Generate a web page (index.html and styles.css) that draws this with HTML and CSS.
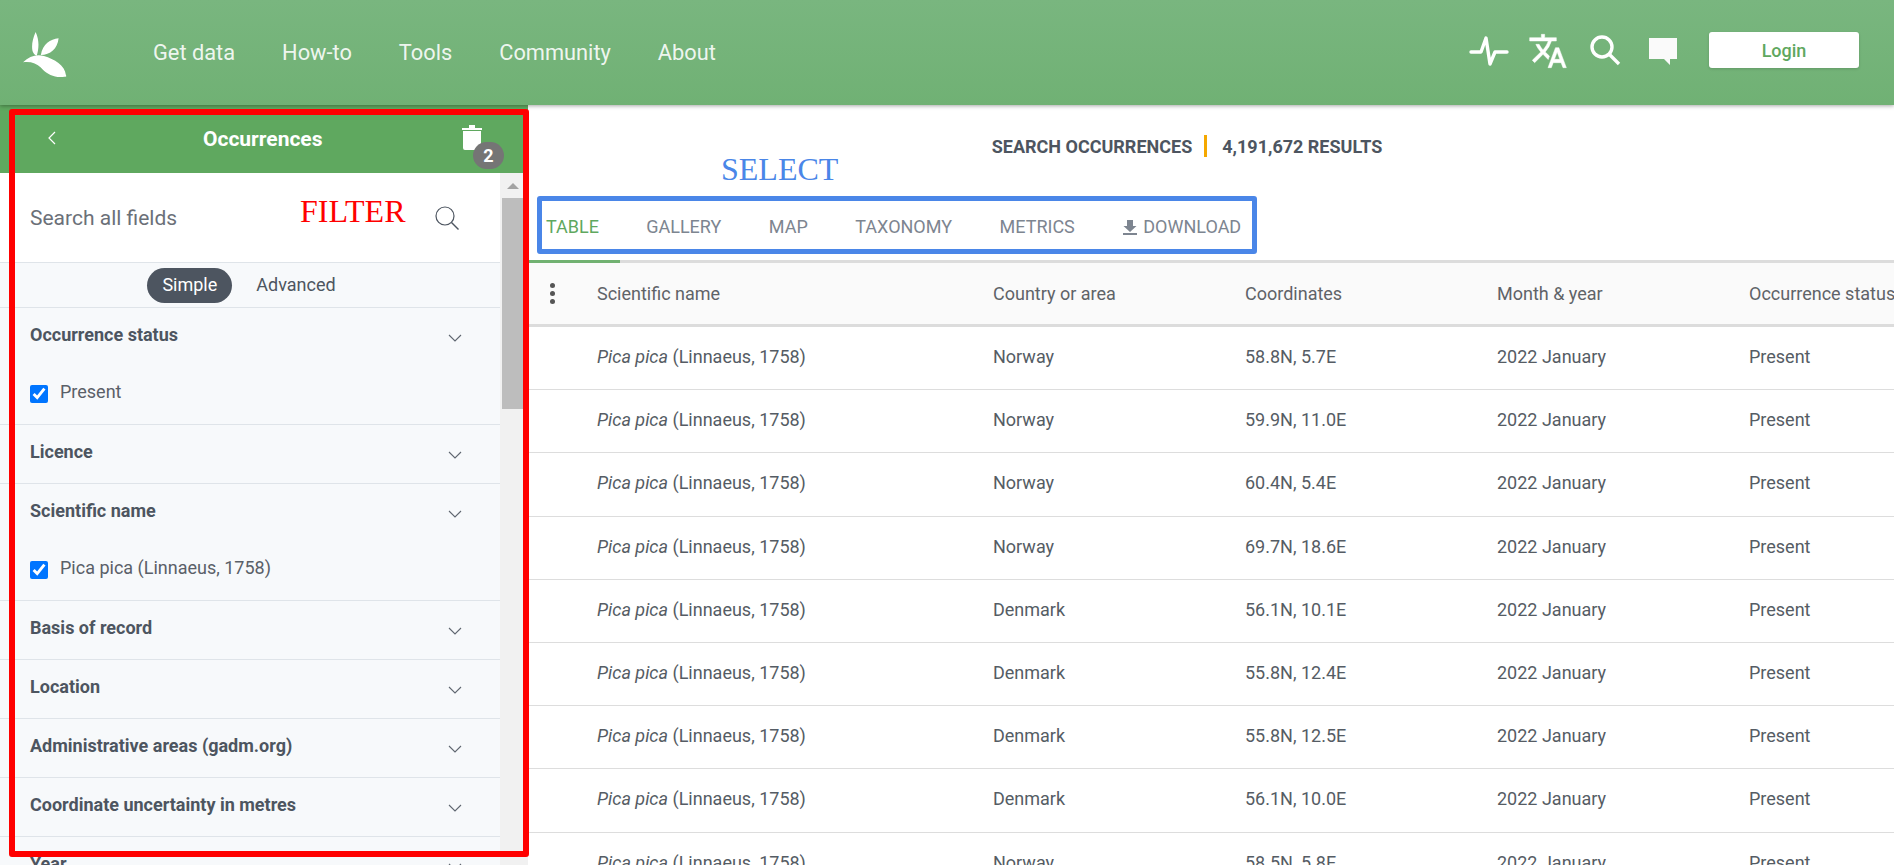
FILE: index.html
```html
<!DOCTYPE html>
<html lang="en">
<head>
<meta charset="utf-8">
<title>Occurrences</title>
<link rel="stylesheet" href="styles.css">
</head>
<body>
<header class="topbar">
  <svg class="logo" viewBox="0 0 42 44" width="44" height="46"><path fill="#fff" d="M12 1C9 8 8 14 9 19c.5 2 2 4 4 5 2-6 3-15-1-23zM34 7c-8 1-15 5-17 16 9 0 16-6 17-16zM0 30c6-6 13-8 20-6 10 3 20 9 21 18 1 2 0 2-3 2-8 1-16-3-21-9-4-4-10-6-17-5z"/></svg>
  <nav class="nav">
    <a>Get data</a><a>How-to</a><a>Tools</a><a>Community</a><a>About</a>
  </nav>
  <div class="tools">
    <svg class="i-pulse" viewBox="0 0 40 32" width="40" height="32"><path fill="none" stroke="#fff" stroke-width="3.4" stroke-linecap="round" stroke-linejoin="round" d="M2 17h10l5-14 4 26 5-12h12"/></svg>
    <svg class="i-trans" viewBox="0 0 24 24" width="40" height="40"><path fill="#fff" stroke="#fff" stroke-width=".3" d="M12.87 15.07l-2.54-2.51.03-.03A17.52 17.52 0 0 0 14.07 6H17V4h-7V2H8v2H1v1.99h11.17C11.5 7.92 10.44 9.75 9 11.35 8.07 10.32 7.3 9.19 6.69 8h-2c.73 1.63 1.73 3.17 2.98 4.56l-5.09 5.02L4 19l5-5 3.11 3.11.76-2.04zM18.5 10h-2L12 22h2l1.12-3h4.75L21 22h2l-4.5-12zm-2.62 7l1.62-4.33L19.12 17h-3.24z"/></svg>
    <svg class="i-search" viewBox="0 0 32 32" width="32" height="32"><circle cx="13" cy="13" r="10" fill="none" stroke="#fff" stroke-width="3.4"/><path stroke="#fff" stroke-width="3.4" d="M20 20l10 10"/></svg>
    <svg class="i-chat" viewBox="0 0 30 30" width="30" height="30"><path fill="#fafafa" d="M1 1h28v21h-7v6l-6-6H1z"/></svg>
    <button class="login">Login</button>
  </div>
</header>
<div class="page">
  <aside class="side">
    <div class="side-head">
      <svg class="back" viewBox="0 0 10 14" width="10" height="14"><path fill="none" stroke="#fff" stroke-width="1.2" d="M8 1L2 7l6 6"/></svg>
      <strong class="side-title">Occurrences</strong>
      <span class="trash">
        <svg viewBox="0 0 20 26" width="20" height="26"><path fill="#fff" d="M0 4h7V1h6v3h7v2H0zM1 7h18v19H3a2 2 0 0 1-2-2z"/></svg>
        <b class="badge">2</b>
      </span>
    </div>
    <div class="side-body">
      <div class="side-scroll">
        <div class="search">
          <span>Search all fields</span>
          <svg viewBox="0 0 26 26" width="26" height="26"><circle cx="11" cy="11" r="9" fill="none" stroke="#4d5560" stroke-width="1.2"/><path stroke="#4d5560" stroke-width="1.4" d="M17.5 17.5l7 7"/></svg>
        </div>
        <div class="toggle"><span class="pill">Simple</span><span class="adv">Advanced</span></div>
        <section class="facet tall"><div class="facet-h"><b>Occurrence status</b><svg class="chev" viewBox="0 0 14 8" width="14" height="8"><path d="M1 1l6 6 6-6"/></svg></div>
          <label class="check"><input type="checkbox" checked><span>Present</span></label></section>
        <section class="facet"><div class="facet-h"><b>Licence</b><svg class="chev" viewBox="0 0 14 8" width="14" height="8"><path d="M1 1l6 6 6-6"/></svg></div></section>
        <section class="facet tall"><div class="facet-h"><b>Scientific name</b><svg class="chev" viewBox="0 0 14 8" width="14" height="8"><path d="M1 1l6 6 6-6"/></svg></div>
          <label class="check"><input type="checkbox" checked><span>Pica pica (Linnaeus, 1758)</span></label></section>
        <section class="facet"><div class="facet-h"><b>Basis of record</b><svg class="chev" viewBox="0 0 14 8" width="14" height="8"><path d="M1 1l6 6 6-6"/></svg></div></section>
        <section class="facet"><div class="facet-h"><b>Location</b><svg class="chev" viewBox="0 0 14 8" width="14" height="8"><path d="M1 1l6 6 6-6"/></svg></div></section>
        <section class="facet"><div class="facet-h"><b>Administrative areas (gadm.org)</b><svg class="chev" viewBox="0 0 14 8" width="14" height="8"><path d="M1 1l6 6 6-6"/></svg></div></section>
        <section class="facet"><div class="facet-h"><b>Coordinate uncertainty in metres</b><svg class="chev" viewBox="0 0 14 8" width="14" height="8"><path d="M1 1l6 6 6-6"/></svg></div></section>
        <section class="facet"><div class="facet-h"><b>Year</b><svg class="chev" viewBox="0 0 14 8" width="14" height="8"><path d="M1 1l6 6 6-6"/></svg></div></section>
      </div>
      <div class="scrollbar"><i class="arrow"></i><i class="thumb"></i></div>
    </div>
  </aside>
  <main class="main">
    <div class="title"><span>SEARCH OCCURRENCES</span><i class="sep"></i><span>4,191,672 RESULTS</span></div>
    <div class="tabs">
      <a class="tab active">TABLE</a><a class="tab">GALLERY</a><a class="tab">MAP</a><a class="tab">TAXONOMY</a><a class="tab">METRICS</a>
      <a class="tab tab-dl"><svg viewBox="0 0 14 16" width="14" height="16"><path fill="#7d8590" d="M4 1h6v6h3.5L7 13 .5 7H4zM0 14h14v2H0z"/></svg> DOWNLOAD</a>
    </div>
    <div class="table">
      <div class="tr th"><span class="kebab"><i></i><i></i><i></i></span><span>Scientific name</span><span>Country or area</span><span>Coordinates</span><span>Month &amp; year</span><span>Occurrence status</span></div>
      <div class="tr"><span></span><span><em>Pica pica</em> (Linnaeus, 1758)</span><span>Norway</span><span>58.8N, 5.7E</span><span>2022 January</span><span>Present</span></div>
      <div class="tr"><span></span><span><em>Pica pica</em> (Linnaeus, 1758)</span><span>Norway</span><span>59.9N, 11.0E</span><span>2022 January</span><span>Present</span></div>
      <div class="tr"><span></span><span><em>Pica pica</em> (Linnaeus, 1758)</span><span>Norway</span><span>60.4N, 5.4E</span><span>2022 January</span><span>Present</span></div>
      <div class="tr"><span></span><span><em>Pica pica</em> (Linnaeus, 1758)</span><span>Norway</span><span>69.7N, 18.6E</span><span>2022 January</span><span>Present</span></div>
      <div class="tr"><span></span><span><em>Pica pica</em> (Linnaeus, 1758)</span><span>Denmark</span><span>56.1N, 10.1E</span><span>2022 January</span><span>Present</span></div>
      <div class="tr"><span></span><span><em>Pica pica</em> (Linnaeus, 1758)</span><span>Denmark</span><span>55.8N, 12.4E</span><span>2022 January</span><span>Present</span></div>
      <div class="tr"><span></span><span><em>Pica pica</em> (Linnaeus, 1758)</span><span>Denmark</span><span>55.8N, 12.5E</span><span>2022 January</span><span>Present</span></div>
      <div class="tr"><span></span><span><em>Pica pica</em> (Linnaeus, 1758)</span><span>Denmark</span><span>56.1N, 10.0E</span><span>2022 January</span><span>Present</span></div>
      <div class="tr"><span></span><span><em>Pica pica</em> (Linnaeus, 1758)</span><span>Norway</span><span>58.5N, 5.8E</span><span>2022 January</span><span>Present</span></div>
    </div>
  </main>
</div>
<div class="mark red-box"></div>
<div class="mark blue-box"></div>
<span class="mark label-filter">FILTER</span>
<span class="mark label-select">SELECT</span>
</body>
</html>
```

FILE: styles.css
```css
* { box-sizing: border-box; }
html, body { margin: 0; height: 100%; overflow: hidden; }
body { width: 1894px; height: 865px; position: relative; background: #fff; font-family: Roboto, "Liberation Sans", sans-serif; color: #4d5560; }

.topbar { height: 105px; display: flex; align-items: center; background: linear-gradient(#79b67f, #70b174); box-shadow: 0 1px 4px rgba(0,0,0,.35); position: relative; z-index: 2; }
.logo { margin: 3px 0 0 23px; }
.nav { display: flex; gap: 47px; margin-left: 86px; font-size: 21.8px; color: rgba(255,255,255,.9); }
.tools { margin-left: auto; display: flex; align-items: center; padding-right: 35px; margin-top: -5px; }
.i-pulse { margin: 2px 18.5px 0 0; }
.i-trans { margin: 2px 21.5px 0 0; }
.i-search { margin-right: 27px; }
.i-chat { margin-right: 31px; margin-top: 4px; }
.login { width: 150px; height: 36px; border: 0; border-radius: 3px; background: #fff; color: #5fa85f; font: 500 18px Roboto, sans-serif; box-shadow: 0 1px 3px rgba(0,0,0,.15); }

.page { display: flex; height: 760px; }
.side { width: 528px; flex: none; display: flex; flex-direction: column; }
.side-head { height: 68px; flex: none; display: flex; align-items: center; background: #5fa85f; color: #fff; padding: 13px 0 0 47px; position: relative; }
.back { margin-top: -16px; }
.side-title { position: absolute; left: 203px; top: 18px; font-size: 21px; font-weight: 700; line-height: 32px; }
.trash { position: absolute; left: 462px; top: 19px; }
.trash svg { display: block; }
.badge { position: absolute; left: 11px; top: 18px; width: 31px; height: 27px; border-radius: 14px; background: #757575; color: #fff; font-size: 18px; text-align: center; line-height: 27px; }
.side-body { flex: 1; display: flex; min-height: 0; }
.side-scroll { flex: 1; min-width: 0; background: #f7f9fb; overflow: hidden; }
.scrollbar { width: 28px; flex: none; background: #f1f1f1; padding: 0 0 0 2px; }
.arrow { display: block; width: 0; height: 0; margin: 10px 0 0 5px; border: 6px solid transparent; border-top: 0; border-bottom-color: #a3a3a3; }
.thumb { display: block; height: 211px; margin-top: 9px; background: #bdbdbd; }
.search { height: 90px; padding: 0 40px 0 30px; display: flex; align-items: center; justify-content: space-between; background: #fff; border-bottom: 1px solid #dfe4e9; font-size: 21px; color: #6b7078; }
.toggle { height: 45px; display: flex; justify-content: center; align-items: center; gap: 24px; border-bottom: 1px solid #dfe4e9; font-size: 18px; padding-right: 17px; }
.adv { margin-top: -2px; }
.pill { background: #4d5560; color: #fff; padding: 0 15px; height: 35px; line-height: 33px; border-radius: 18px; }
.facet { height: 59px; border-bottom: 1px solid #dfe4e9; padding: 0 30px; }
.facet.tall { height: 117px; }
.facet-h { display: flex; justify-content: space-between; align-items: center; height: 57px; padding-right: 8px; font-size: 18px; }
.facet-h b { font-weight: 700; margin-top: -5px; }
.chev { fill: none; stroke: #5f6670; stroke-width: 1.1; margin-top: 2px; }
.check { display: flex; align-items: center; gap: 12px; font-size: 18px; color: #5a6068; margin-top: 18px; }
.check input { appearance: auto; width: 18px; height: 18px; margin: 2px 0 0; accent-color: #0075ff; }
.check span { margin-top: -3px; }

.main { flex: 1; min-width: 0; overflow: hidden; }
.title { height: 82px; display: flex; align-items: center; justify-content: center; gap: 12px; font-size: 18px; font-weight: 700; color: #4d5560; margin-left: -48px; }
.sep { width: 3px; height: 22px; background: #f5a800; margin: 0 3px 0 0; }
.tabs { height: 76px; display: flex; border-bottom: 3px solid #dcdcdc; font-size: 18px; color: #7d8590; }
.tab { padding: 29px 23.75px 0; display: flex; gap: 5px; align-items: flex-start; height: 76px; line-height: 22px; }
.tab svg { margin-top: 3px; }
.tab-dl { gap: 6px; margin-left: 1px; }
.tab.active { padding: 29px 21px 0 18px; margin-right: 2.5px; color: #5fa85f; border-bottom: 3px solid #71b171; }
.table { font-size: 18px; color: #555c64; }
.tr { display: grid; grid-template-columns: 69px 396px 252px 252px 252px 252px; height: 63.2px; padding-bottom: 3px; align-items: center; border-bottom: 1px solid #ddd; white-space: nowrap; }
.th { height: 64px; padding-bottom: 0; background: #fafafa; border-bottom: 3px solid #dcdcdc; color: #5f6368; }
.kebab { display: flex; flex-direction: column; gap: 3px; padding-left: 22px; }
.kebab i { width: 5px; height: 5px; border-radius: 50%; background: #555; }

.mark { position: absolute; z-index: 5; }
.red-box { left: 9px; top: 109px; width: 520px; height: 748px; border: 6px solid #f00; border-radius: 3px; }
.blue-box { left: 537px; top: 196px; width: 720px; height: 58px; border: 5px solid #4a86e8; border-radius: 3px; }
.label-filter { left: 300px; top: 193px; font: 32px "Liberation Serif", serif; color: #f00; }
.label-select { left: 721px; top: 151px; font: 32px "Liberation Serif", serif; color: #4a86e8; }
```
